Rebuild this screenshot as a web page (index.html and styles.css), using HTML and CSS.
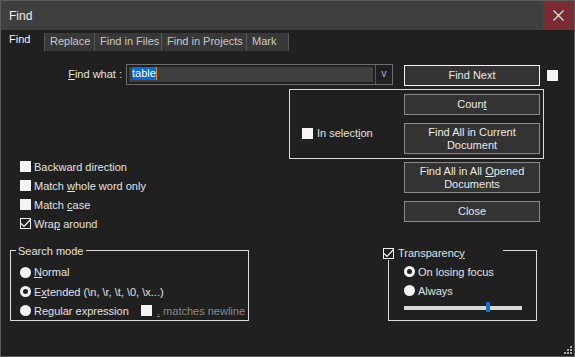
FILE: index.html
```html
<!DOCTYPE html>
<html lang="en">
<head>
  <meta charset="UTF-8" />
  <meta name="viewport" content="width=device-width, initial-scale=1.0"/>
  <title>Find</title>
  <link rel="stylesheet" href="styles.css">
</head>
<body>
  <div class="dialog">
    <div class="titlebar">
      <span class="title">Find</span>
      <div class="close-btn">
        <svg width="11" height="11" viewBox="0 0 11 11"><path d="M0.5 0.5 L10.5 10.5 M10.5 0.5 L0.5 10.5" stroke="#f4f4f4" stroke-width="1.1" fill="none"/></svg>
      </div>
    </div>

    <!-- tab strip -->
    <div class="tabs">
      <div class="tab tab-find">Find</div>
      <div class="tab tab-replace">Replace</div>
      <div class="tab tab-files">Find in Files</div>
      <div class="tab tab-projects">Find in Projects</div>
      <div class="tab tab-mark">Mark</div>
    </div>

    <div class="panel">
      <div class="find-row">
        <div class="find-label"><u>F</u>ind what :</div>
        <div class="combo">
          <div class="combo-input"><span class="sel-text">table</span><span class="caret"></span></div>
          <div class="combo-arrow">v</div>
        </div>
        <div class="btn btn-focus find-next"><span>Find Next</span></div>
        <span class="cb top-cb"></span>
      </div>

      <div class="sel-group">
        <div class="sel-left">
          <div class="check-row"><span class="cb"></span><span>In select<u>i</u>on</span></div>
        </div>
        <div class="btn-col">
          <div class="btn"><span>Coun<u>t</u></span></div>
          <div class="btn btn-tall"><span>Find All in Current<br>Document</span></div>
        </div>
      </div>

      <div class="mid-row">
        <div class="options">
          <div class="check-row opt"><span class="cb"></span><span>Backward direction</span></div>
          <div class="check-row opt"><span class="cb"></span><span>Match <u>w</u>hole word only</span></div>
          <div class="check-row opt"><span class="cb"></span><span>Match <u>c</u>ase</span></div>
          <div class="check-row opt">
            <span class="cb checked"><svg width="9" height="9" viewBox="0 0 9 9"><path d="M0 4.5 L3 7.5 L9.5 0.5" stroke="#f4f4f4" stroke-width="1.2" fill="none"/></svg></span>
            <span>Wra<u>p</u> around</span>
          </div>
        </div>
        <div class="btn-col side">
          <div class="btn btn-tall"><span>Find All in All <u>O</u>pened<br>Documents</span></div>
          <div class="btn"><span>Close</span></div>
        </div>
      </div>

      <div class="bottom-row">
        <div class="group search-mode">
          <div class="legend">Search mode</div>
          <div class="radio-row r1"><span class="radio"></span><span><u>N</u>ormal</span></div>
          <div class="radio-row"><span class="radio on"></span><span>E<u>x</u>tended (\n, \r, \t, \0, \x...)</span></div>
          <div class="radio-row">
            <span class="radio"></span><span class="regex-label">Re<u>g</u>ular expression</span>
            <span class="cb"></span><span class="dim"><u>.</u> matches newline</span>
          </div>
        </div>

        <div class="group transparency">
          <div class="legend legend-check">
            <span class="cb checked"><svg width="9" height="9" viewBox="0 0 9 9"><path d="M0 4.5 L3 7.5 L9.5 0.5" stroke="#f4f4f4" stroke-width="1.2" fill="none"/></svg></span>
            <span>Transparenc<u>y</u></span>
          </div>
          <div class="radio-row"><span class="radio on"></span><span>On losing focus</span></div>
          <div class="radio-row"><span class="radio"></span><span>Always</span></div>
          <div class="slider"><span class="thumb"></span></div>
        </div>
      </div>
    </div>

    <!-- resize grip -->
    <svg class="grip" width="8" height="8" viewBox="0 0 8 8">
      <rect x="6" y="0" width="2" height="2" fill="#a9a9a9"/>
      <rect x="3" y="3" width="2" height="2" fill="#a9a9a9"/>
      <rect x="6" y="3" width="2" height="2" fill="#a9a9a9"/>
      <rect x="0" y="6" width="2" height="2" fill="#a9a9a9"/>
      <rect x="3" y="6" width="2" height="2" fill="#a9a9a9"/>
      <rect x="6" y="6" width="2" height="2" fill="#a9a9a9"/>
    </svg>
  </div>
</body>
</html>
```

FILE: styles.css
```css
* {
  box-sizing: border-box;
}
body {
  margin: 0;
  background: #202020;
  font-family: "Liberation Sans", Arial, sans-serif;
  font-size: 11px;
  color: #e2e2e2;
}
u {
  text-underline-offset: 1px;
}
.dialog {
  position: relative;
  width: 575px;
  height: 357px;
  border: 1px solid #5b5b5b;
  background: #202020;
}

/* title bar */
.titlebar {
  display: flex;
  align-items: center;
  height: 29px;
  background: #403f40;
}
.title {
  flex: 1;
  padding-left: 8px;
  font-size: 12px;
  color: #f0f0f0;
}
.close-btn {
  display: flex;
  align-items: center;
  justify-content: center;
  width: 31px;
  height: 29px;
  background: #7b2b33;
}

/* tabs */
.tabs {
  display: flex;
  align-items: flex-end;
  height: 21px;
}
.tab {
  height: 18px;
  line-height: 17px;
  padding-left: 5px;
  background: #383838;
  border-left: 1px solid #585858;
  color: #c8c8c8;
  white-space: nowrap;
}
.tab-find {
  width: 43px;
  height: 21px;
  line-height: 19px;
  padding-left: 8px;
  background: none;
  border-left: none;
  color: #f4f4f4;
}
.tab-replace { width: 50px; }
.tab-files { width: 67px; }
.tab-projects { width: 85px; }
.tab-mark {
  width: 43px;
  border-right: 1px solid #585858;
}

.panel {
  padding-top: 13px;
}

/* find what row */
.find-row {
  display: flex;
  align-items: flex-start;
}
.find-label {
  width: 121px;
  line-height: 21px;
  text-align: right;
}
.combo {
  display: flex;
  width: 267px;
  height: 21px;
  margin-left: 4px;
  border: 1px solid #6c6c6c;
}
.combo-input {
  display: flex;
  width: 244px;
  height: 15px;
  margin: 2px 0 0 2px;
  padding-left: 3px;
  background: #3f3f3f;
}
.sel-text {
  height: 13px;
  line-height: 13px;
  background: #0b69cf;
  color: #fff;
}
.caret {
  width: 1px;
  height: 13px;
  background: #f08a24;
}
.combo-arrow {
  flex: 1;
  margin-left: 2px;
  border-left: 1px solid #5a5a5a;
  text-align: center;
  line-height: 18px;
  font-size: 10px;
  color: #a9b4d8;
}

/* buttons */
.btn {
  display: flex;
  align-items: center;
  justify-content: center;
  width: 136px;
  height: 21px;
  border: 1px solid #8b8b8b;
  background: #333;
  color: #e8e8e8;
  text-align: center;
  line-height: 13px;
}
.btn-focus {
  border-color: #f4f4f4;
}
.btn-tall {
  height: 31px;
}
.find-next {
  margin: 1px 0 0 11px;
}
.btn-col {
  display: flex;
  flex-direction: column;
  gap: 8px;
  padding-top: 4px;
}

/* checkboxes and radios */
.cb {
  flex: none;
  width: 11px;
  height: 11px;
  background: #f4f4f4;
}
.cb.checked {
  background: #202020;
  border: 1px solid #f0f0f0;
}
.cb svg {
  display: block;
  overflow: visible;
}
.top-cb {
  margin: 6px 0 0 7px;
}
.check-row {
  display: flex;
  align-items: center;
  gap: 3px;
}
.radio-row {
  display: flex;
  align-items: center;
  gap: 3px;
  height: 19px;
}
.radio {
  flex: none;
  width: 11px;
  height: 11px;
  border-radius: 50%;
  background: #f4f4f4;
}
.radio.on {
  background: #202020;
  border: 3px solid #f4f4f4;
}

/* in selection group */
.sel-group {
  display: flex;
  width: 255px;
  height: 70px;
  margin: 3px 0 0 288px;
  border: 1px solid #dadada;
}
.sel-left {
  width: 114px;
  padding: 37px 0 0 12px;
}
.sel-left .check-row {
  gap: 4px;
}

/* options + side buttons */
.mid-row {
  display: flex;
}
.options {
  flex: 1;
  margin-top: -2px;
  padding-left: 19px;
}
.opt {
  height: 19px;
}
.side {
  width: 136px;
  margin-right: 34px;
  padding-top: 3px;
}

/* bottom groups */
.bottom-row {
  display: flex;
  align-items: flex-start;
  margin-top: 17px;
}
.group {
  position: relative;
  height: 71px;
  padding-top: 11px;
  border: 1px solid #dadada;
}
.search-mode {
  width: 239px;
  margin-left: 9px;
  padding-left: 9px;
}
.search-mode .r1 {
  height: 20px;
}
.regex-label {
  width: 104px;
}
.dim {
  margin-left: 2px;
  color: #8a8a8a;
}
.transparency {
  width: 149px;
  margin-left: 139px;
  padding-left: 15px;
}
.legend {
  position: absolute;
  left: 5px;
  top: -7px;
  padding: 0 3px 0 2px;
  line-height: 15px;
  background: #202020;
}
.legend-check {
  display: flex;
  align-items: center;
  gap: 4px;
  left: -6px;
  top: -5px;
  width: 120px;
  height: 14px;
  padding: 0;
}
.slider {
  position: relative;
  width: 118px;
  height: 4px;
  margin-top: 6px;
  background: #d8d8d8;
}
.thumb {
  position: absolute;
  left: 82px;
  top: -4px;
  width: 4px;
  height: 10px;
  background: #0c73d6;
}

.grip {
  position: absolute;
  right: 2px;
  bottom: 2px;
}
```
